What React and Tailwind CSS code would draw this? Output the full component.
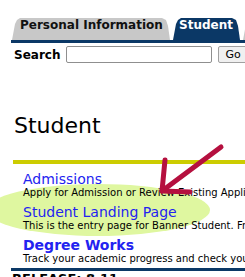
const tabShape =
  "[clip-path:polygon(0_100%,3px_6px,5px_2px,8px_0,calc(100%_-_8px)_0,calc(100%_-_4px)_2px,calc(100%_-_2px)_8px,100%_100%)]";

const items = [
  {
    title: "Admissions",
    desc: "Apply for Admission or Review Existing Applications",
    bold: false,
  },
  {
    title: "Student Landing Page",
    desc: "This is the entry page for Banner Student. From here you can navigate",
    bold: false,
  },
  {
    title: "Degree Works",
    desc: "Track your academic progress and check your degree requirements",
    bold: true,
  },
];

export default function App() {
  return (
    <div className="relative w-[245px] h-[277px] overflow-hidden bg-white font-['DejaVu_Sans',sans-serif] text-black">
      <div className="w-[720px] pl-[11px]">
        {/* tabs */}
        <div className="flex items-end gap-[3px] pt-[18px] pl-[1px]">
          <div
            className={`w-[158px] h-[22px] bg-[#c8c8c8] pl-[8px] text-[12px] leading-[14px] font-bold text-[#111] whitespace-nowrap ${tabShape}`}
          >
            Personal Information
          </div>
          <div
            className={`w-[67px] h-[22px] bg-[#0b3866] pl-[6px] text-[12px] leading-[14px] font-bold text-white whitespace-nowrap ${tabShape}`}
          >
            Student
          </div>
          <div
            className={`w-[120px] h-[22px] bg-[#c8c8c8] pl-[8px] text-[12px] leading-[14px] font-bold text-[#111] whitespace-nowrap ${tabShape}`}
          >
            Employee
          </div>
        </div>
        <div className="h-[3px] bg-[#0b3866]" />

        {/* search */}
        <div className="mt-[3px] flex items-center h-[17px] pl-[3px]">
          <span className="text-[12px] leading-[14px] font-bold">Search</span>
          <div className="ml-[6px] w-[146px] h-[17px] border border-[#8f8f8f] rounded-[2px] bg-white" />
          <div className="ml-[6px] w-[34px] h-[17px] border border-[#a0a0a0] rounded-[2px] bg-[#f0f0f0] flex items-center pl-[6px] text-[11px] leading-[12px]">
            Go
          </div>
        </div>

        {/* heading */}
        <div className="mt-[50px] pl-[3px] text-[22px] leading-[26px]">Student</div>
        <div className="mt-[21px] ml-[2px] h-[4px] bg-[#cccc00]" />

        {/* menu */}
        <div className="relative mt-[7px] pl-[12px] flex flex-col gap-[5px]">
          <div className="absolute left-[-25px] top-[13px] w-[224px] h-[52px] rounded-[50%] bg-[#dff7a0]" />
          {items.map((item) => (
            <div key={item.title} className="relative whitespace-nowrap">
              <div
                className={`text-[14px] leading-[16px] text-[#2323f0] ${
                  item.bold ? "font-bold" : ""
                }`}
              >
                {item.title}
              </div>
              <div className="text-[10px] leading-[12px]">{item.desc}</div>
            </div>
          ))}
        </div>

        <div className="mt-[3px] h-[3px] bg-[#0b3866]" />
        <div className="pl-[1px] text-[13px] leading-[16px] font-bold">RELEASE: 8.11</div>
      </div>

      {/* annotation arrow */}
      <svg
        className="absolute left-0 top-0 pointer-events-none"
        width="245"
        height="277"
        viewBox="0 0 245 277"
      >
        <g fill="none" stroke="#b5103f" strokeWidth="5" strokeLinecap="round" strokeLinejoin="round">
          <path d="M221 147 L162 191" />
          <path d="M165 160 L162 191 L190 192" />
        </g>
      </svg>
    </div>
  );
}
